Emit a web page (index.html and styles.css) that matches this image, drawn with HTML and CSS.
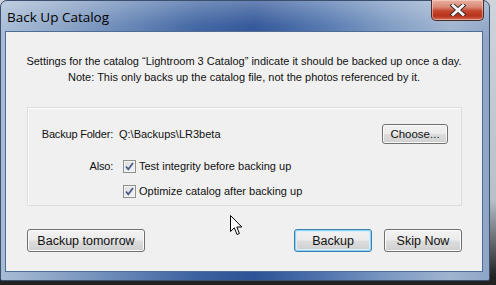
FILE: index.html
```html
<!DOCTYPE html>
<html>
<head>
<meta charset="utf-8">
<link rel="stylesheet" href="styles.css">
</head>
<body>
<div class="screen">
  <div class="window">
    <div class="titlebar">
      <span class="title">Back Up Catalog</span>
      <div class="close">
        <svg width="20" height="12" viewBox="0 0 20 12">
          <path d="M5 1.5 L15 10.5 M15 1.5 L5 10.5" stroke="#3a2a2a" stroke-width="4.6" stroke-linecap="square" fill="none"/>
          <path d="M5 1.5 L15 10.5 M15 1.5 L5 10.5" stroke="#f4f4f4" stroke-width="2.8" stroke-linecap="square" fill="none"/>
        </svg>
      </div>
    </div>
    <div class="client">
      <div class="message">
        <p>Settings for the catalog “Lightroom 3 Catalog” indicate it should be backed up once a day.</p>
        <p>Note: This only backs up the catalog file, not the photos referenced by it.</p>
      </div>
      <div class="group">
        <span class="label">Backup Folder:</span>
        <span class="value">Q:\Backups\LR3beta</span>
        <button class="btn choose">Choose...</button>

        <span class="label">Also:</span>
        <label class="check"><span class="box"><svg width="11" height="11" viewBox="0 0 11 11"><path d="M2 5.5 L4.3 8.3 L9 2" stroke="#4a5f8a" stroke-width="1.8" fill="none"/></svg></span>Test integrity before backing up</label>
        <span></span>

        <span class="label"></span>
        <label class="check"><span class="box"><svg width="11" height="11" viewBox="0 0 11 11"><path d="M2 5.5 L4.3 8.3 L9 2" stroke="#4a5f8a" stroke-width="1.8" fill="none"/></svg></span>Optimize catalog after backing up</label>
        <span></span>
      </div>
      <div class="actions">
        <button class="btn wide">Backup tomorrow</button>
        <div class="spacer"></div>
        <button class="btn default">Backup</button>
        <button class="btn">Skip Now</button>
      </div>
      <svg class="cursor" width="13" height="21" viewBox="0 0 13 21">
        <path d="M0.5 0.5 L0.5 16.5 L4.3 12.8 L7 19.5 L9.4 18.5 L6.8 12 L11.8 12 Z" fill="#ffffff" stroke="#000000" stroke-width="1"/>
      </svg>
    </div>
  </div>
</div>
</body>
</html>
```

FILE: styles.css
```css
* { box-sizing: border-box; }
html, body { margin: 0; padding: 0; }
body {
  width: 496px;
  height: 285px;
  overflow: hidden;
  background: #1c1c1c;
  font-family: "Liberation Sans", Arial, sans-serif;
}
.screen {
  width: 496px;
  height: 285px;
  background: linear-gradient(180deg, #cfd4da 0%, #b8bfc8 70%, #222 97%);
}
.window {
  width: 490px;
  height: 281px;
  border-radius: 7px 7px 2px 2px;
  background:
    linear-gradient(180deg, rgba(255,255,255,0.28) 0px, rgba(255,255,255,0.05) 24px, rgba(0,0,0,0) 40px),
    linear-gradient(90deg, #a7bcd5 0%, #8aa3c5 12%, #6585b5 25%, #3c62a0 40%, #2d5296 52%, #4f74ad 66%, #7d9ac2 80%, #9fb4cf 92%, #8ea6c6 100%);
  border: 1px solid #3b4f6e;
  padding: 0 6px 8px 4px;
  display: flex;
  flex-direction: column;
}
.titlebar {
  height: 30px;
  flex: none;
  display: flex;
  align-items: flex-start;
  justify-content: space-between;
}
.title {
  margin: 8px 0 0 2px;
  font-family: "Open Sans", sans-serif;
  font-size: 13.5px;
  line-height: 16px;
  color: #000;
}
.close {
  width: 53px;
  height: 21px;
  margin-top: -1px;
  margin-right: -1px;
  border: 1px solid #4a2a2a;
  border-top: none;
  border-radius: 0 0 5px 5px;
  background: linear-gradient(180deg, #e8b0a3 0%, #d98a76 35%, #c4452c 55%, #b8321b 80%, #d0705a 100%);
  box-shadow: inset 0 0 0 1px rgba(255,220,210,0.5);
  display: flex;
  align-items: center;
  justify-content: center;
}
.client {
  position: relative;
  flex: 1;
  background: #f0f0f0;
  border: 1px solid #4f6d94;
  display: flex;
  flex-direction: column;
}
.message {
  padding-top: 21px;
  text-align: center;
  font-size: 11px;
  line-height: 16px;
  color: #111;
}
.message p { margin: 0; }
.group {
  margin: 22px 20px 0 21px;
  height: 99px;
  border: 1px solid #dcdcdc;
  box-shadow: inset 1px 1px 0 #ffffff;
  display: grid;
  grid-template-columns: 85px 1fr auto;
  grid-template-rows: 32px 32px 18px;
  column-gap: 6px;
  align-items: center;
  padding: 10px 13px 0 0;
  font-size: 11px;
  color: #111;
}
.label { text-align: right; letter-spacing: -0.2px; }
.check {
  display: flex;
  align-items: center;
  gap: 3px;
  margin-left: 4px;
}
.box {
  width: 13px;
  height: 13px;
  border: 1px solid #8e8f8f;
  background: linear-gradient(135deg, #dcdcdc 0%, #f6f6f6 100%);
  box-shadow: inset 0 0 0 1px #f4f4f4;
  display: flex;
  align-items: center;
  justify-content: center;
}
.box svg { display: block; }
.btn {
  font-family: "Liberation Sans", Arial, sans-serif;
  font-size: 12.5px;
  color: #111;
  height: 23px;
  width: 78px;
  padding: 0;
  border: 1px solid #707070;
  border-radius: 3px;
  background: linear-gradient(180deg, #f2f2f2 0%, #ebebeb 48%, #dddddd 52%, #cfcfcf 100%);
  box-shadow: inset 0 0 0 1px #fbfbfb;
}
.choose {
  width: 66px;
  height: 20px;
  font-size: 11.5px;
}
.actions {
  display: flex;
  margin: 23px 20px 0 21px;
  gap: 12px;
}
.spacer { flex: 1; }
.wide { width: 118px; }
.default {
  border-color: #3c7fb1;
  box-shadow: inset 0 0 0 1px #8fd2f2, inset 0 0 0 2px #d8eef9;
}
.cursor {
  position: absolute;
  left: 224px;
  top: 183px;
}
```
